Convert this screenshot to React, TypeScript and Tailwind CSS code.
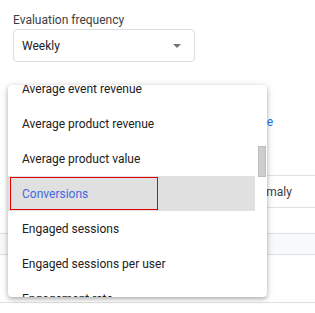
import React from 'react';

const metrics = [
  'Average event revenue',
  'Average product revenue',
  'Average product value',
  'Conversions',
  'Engaged sessions',
  'Engaged sessions per user',
  'Engagement rate',
];

const MetricMenu: React.FC<{ selected: string }> = ({ selected }) => (
  <div className="absolute left-[8px] top-[85px] h-[212px] w-[259px] overflow-hidden rounded bg-white shadow-[0_2px_4px_rgba(0,0,0,0.25),0_1px_8px_rgba(0,0,0,0.12)]">
    <div className="-mt-[14px] w-[247px]">
      {metrics.map((m) => {
        const active = m === selected;
        return (
          <div
            key={m}
            className={
              active
                ? 'relative flex h-[35px] items-center bg-[#e0e0e0] px-[14px] text-[#4368e0]'
                : 'flex h-[35px] items-center px-[14px] text-[#202124]'
            }
          >
            {m}
            {/* highlight annotation */}
            {active && (
              <div className="absolute left-[2px] top-[1px] h-[33px] w-[148px] border border-[#e00000]" />
            )}
          </div>
        );
      })}
    </div>
    {/* scrollbar thumb */}
    <div className="absolute right-[1px] top-[61px] h-[31px] w-[8px] border border-[#bdbdbd] bg-[#cdcdcd]" />
  </div>
);

export default function App() {
  return (
    <div
      className="relative h-[313px] w-[315px] overflow-hidden bg-white text-[12px]"
      style={{ fontFamily: 'Roboto, "Liberation Sans", sans-serif' }}
    >
      <div className="px-[13px] pt-[11px]">
        <div className="text-[#3c4043]">Evaluation frequency</div>
        <div className="flex h-[33px] w-[182px] items-center justify-between rounded border border-[#dadce0] pl-[8px] pr-[13px] text-[#202124]">
          <span>Weekly</span>
          <svg width="8" height="4" viewBox="0 0 8 4">
            <path d="M0 0h8L4 4z" fill="#757575" />
          </svg>
        </div>
      </div>

      {/* content under the menu */}
      <div className="mt-[51px] w-[273px] text-right text-[#1a73e8]">Create</div>
      <div className="mt-[44px] ml-[240px] border-t border-[#e0e0e0]">
        <div className="flex h-[32px] items-center border-b border-[#e0e0e0] pl-[5px] text-[#3c4043]">
          Anomaly
        </div>
      </div>
      <div className="h-[25px]" />
      <div className="h-[22px] border-y border-[#e0e0e0] bg-[#f8f9fa]" />
      <div className="h-[48px] border-b border-[#e0e0e0]" />

      <MetricMenu selected="Conversions" />
    </div>
  );
}
